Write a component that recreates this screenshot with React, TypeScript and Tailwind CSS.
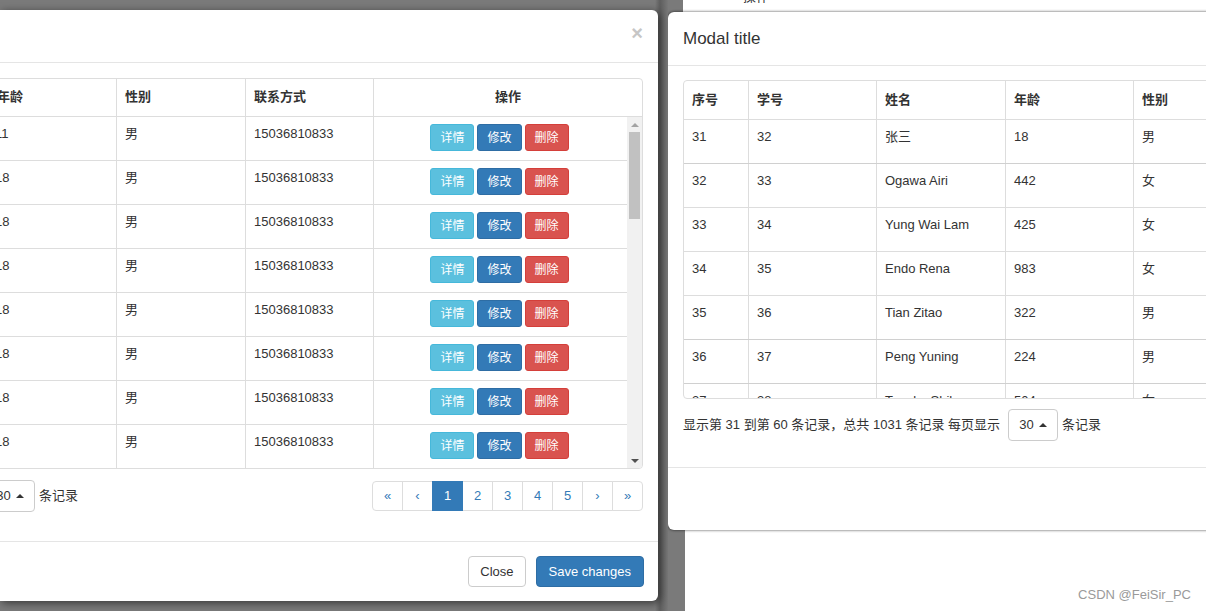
import React from "react";

const FONT = "font-['Liberation_Sans','Noto_Sans_CJK_SC',sans-serif]";
const colW = [65, 128, 129, 128, 129, 128];
const heads = ["序号", "学号", "姓名", "年龄", "性别", "联系方式"];

const leftRows = [
  ["11", "12", "李四", "11"],
  ["12", "13", "王五", "18"],
  ["13", "14", "赵六", "18"],
  ["14", "15", "孙七", "18"],
  ["15", "16", "周八", "18"],
  ["16", "17", "吴九", "18"],
  ["17", "18", "郑十", "18"],
  ["18", "19", "钱一", "18"],
];

const rightRows = [
  ["31", "32", "张三", "18", "男"],
  ["32", "33", "Ogawa Airi", "442", "女"],
  ["33", "34", "Yung Wai Lam", "425", "女"],
  ["34", "35", "Endo Rena", "983", "女"],
  ["35", "36", "Tian Zitao", "322", "男"],
  ["36", "37", "Peng Yuning", "224", "男"],
  ["37", "38", "Tanaka Shiho", "504", "女"],
];

function Caret() {
  return (
    <span className="inline-block w-0 h-0 border-x-[4px] border-x-transparent border-b-[4px] border-b-[#333] ml-[5px]" />
  );
}

function SizeSelect() {
  return (
    <div className="shrink-0 w-[50px] h-[32px] flex items-center justify-center bg-white border border-[#ccc] rounded-[4px] text-[13px] text-[#333]">
      <span>30</span>
      <Caret />
    </div>
  );
}

function Btn({ label, cls }: { label: string; cls: string }) {
  return (
    <div className={`h-[27px] px-[9px] flex items-center text-[12px] text-white rounded-[3px] border ${cls}`}>{label}</div>
  );
}

function LeftModal() {
  const pages = ["«", "‹", "1", "2", "3", "4", "5", "›", "»"];
  return (
    <div className="w-[658px] h-[591px] bg-white rounded-r-[6px] overflow-hidden shadow-[2px_2px_8px_rgba(0,0,0,0.55)]">
      <div className="w-[1007px] ml-[-349px] h-full flex flex-col">
        {/* header */}
        <div className="h-[53px] shrink-0 border-b border-[#e5e5e5] flex items-start justify-end pr-[15px] pt-[13px]">
          <span className="text-[20px] font-bold text-[#c6c6c6] leading-[20px]">×</span>
        </div>
        {/* body */}
        <div className="h-[478px] shrink-0 px-[15px] pt-[15px]">
          <div className="h-[391px] border border-[#ddd] rounded-[4px] overflow-hidden flex flex-col">
            <div className="h-[38px] shrink-0 flex border-b border-[#ddd]">
              {heads.map((h, i) => (
                <div key={h} style={{ width: colW[i] }} className="shrink-0 border-r border-[#ddd] pl-[8px] pt-[9px] text-[13px] leading-[18px] font-bold text-[#333]">
                  {h}
                </div>
              ))}
              <div className="flex-1 pt-[9px] text-center text-[13px] leading-[18px] font-bold text-[#333]">操作</div>
            </div>
            <div className="flex-1 flex overflow-hidden">
              <div className="flex-1 overflow-hidden">
                {leftRows.map((r, ri) => (
                  <div key={ri} className="h-[44px] flex border-b border-[#ddd]">
                    {[...r, "男", "15036810833"].map((c, i) => (
                      <div key={i} style={{ width: colW[i] }} className={`shrink-0 border-r border-[#ddd] ${i === 3 ? "pl-[6px]" : "pl-[8px]"} pt-[8px] text-[13px] leading-[18px] text-[#333]`}>
                        {c}
                      </div>
                    ))}
                    <div className="flex-1 flex justify-center gap-[3px] pt-[7px] pr-[2px]">
                      <Btn label="详情" cls="bg-[#5bc0de] border-[#46b8da]" />
                      <Btn label="修改" cls="bg-[#337ab7] border-[#2e6da4]" />
                      <Btn label="删除" cls="bg-[#d9534f] border-[#d43f3a]" />
                    </div>
                  </div>
                ))}
              </div>
              <div className="w-[15px] shrink-0 bg-[#f1f1f1] flex flex-col items-center">
                <div className="h-[15px] flex items-center justify-center">
                  <span className="w-0 h-0 border-x-[4px] border-x-transparent border-b-[4px] border-b-[#a3a3a3]" />
                </div>
                <div className="w-[11px] h-[87px] bg-[#c1c1c1]" />
                <div className="flex-1" />
                <div className="h-[15px] flex items-center justify-center">
                  <span className="w-0 h-0 border-x-[4px] border-x-transparent border-t-[4px] border-t-[#505050]" />
                </div>
              </div>
            </div>
          </div>
          <div className="mt-[11px] h-[32px] flex items-center justify-between">
            <div className="flex items-center text-[13px] text-[#333]">
              <span className="inline-block w-[315px] whitespace-nowrap overflow-hidden">显示第 1 到第 30 条记录，总共 1031 条记录 每页显示</span>
              <span className="ml-[4px]"><SizeSelect /></span>
              <span className="ml-[4px]">条记录</span>
            </div>
            <div className="flex">
              {pages.map((p, i) => (
                <div
                  key={i}
                  className={`w-[31px] h-[30px] flex items-center justify-center border text-[13px] ${i > 0 ? "-ml-px" : "rounded-l-[4px]"} ${i === 8 ? "rounded-r-[4px]" : ""} ${p === "1" ? "bg-[#337ab7] border-[#337ab7] text-white relative z-10" : "bg-white border-[#ddd] text-[#337ab7]"}`}
                >
                  {p}
                </div>
              ))}
            </div>
          </div>
        </div>
        {/* footer */}
        <div className="flex-1 border-t border-[#e5e5e5] flex justify-end items-start pt-[14px] pr-[14px] gap-[10px]">
          <div className="h-[31px] px-[11px] flex items-center bg-white border border-[#ccc] rounded-[4px] text-[13px] text-[#333]">Close</div>
          <div className="h-[31px] px-[12px] flex items-center bg-[#337ab7] border border-[#2e6da4] rounded-[4px] text-[13px] text-white">Save changes</div>
        </div>
      </div>
    </div>
  );
}

function RightModal() {
  return (
    <div className="relative z-10 w-[900px] h-[518px] shrink-0 bg-white rounded-l-[6px] overflow-hidden shadow-[0_0_3px_rgba(0,0,0,0.75)] flex flex-col">
      <div className="h-[54px] shrink-0 border-b border-[#e5e5e5] flex items-center pl-[15px] text-[17px] text-[#333]">Modal title</div>
      <div className="h-[401px] shrink-0 px-[15px] pt-[14px]">
        <div className="h-[319px] border border-[#ddd] rounded-[4px] overflow-hidden flex flex-col">
          <div className="h-[39px] shrink-0 flex border-b border-[#ddd]">
            {[...heads, "操作"].map((h, i) => (
              <div key={h} style={{ width: colW[i] ?? 200 }} className="shrink-0 border-r border-[#ddd] pl-[8px] pt-[10px] text-[13px] leading-[18px] font-bold text-[#333]">
                {h}
              </div>
            ))}
          </div>
          <div className="flex-1 overflow-hidden">
            {rightRows.map((r, ri) => (
              <div key={ri} className={`h-[44px] flex border-b ${ri === 0 || ri === 4 || ri === 5 ? "border-[#d0d0d0]" : "border-[#ddd]"}`}>
                {[...r, "15036810833"].map((c, i) => (
                  <div key={i} style={{ width: colW[i] }} className="shrink-0 border-r border-[#ddd] pl-[8px] pt-[8px] text-[13px] leading-[18px] text-[#333]">
                    {c}
                  </div>
                ))}
              </div>
            ))}
          </div>
        </div>
        <div className="mt-[10px] h-[31px] flex items-center text-[13px] text-[#333]">
          <span className="inline-block w-[321px] whitespace-nowrap">显示第 31 到第 60 条记录，总共 1031 条记录 每页显示</span>
          <span className="ml-[4px]"><SizeSelect /></span>
          <span className="ml-[4px]">条记录</span>
        </div>
      </div>
      <div className="flex-1 border-t border-[#e5e5e5]" />
    </div>
  );
}

export default function App() {
  return (
    <div className={`w-[1206px] h-[611px] overflow-hidden bg-[#7a7a7a] flex ${FONT}`}>
      <div className="w-[668px] shrink-0 pt-[10px] bg-[linear-gradient(to_right,#7a7a7a_655px,#5e5e5e_660px,#787878_668px)]">
        <LeftModal />
      </div>
      <div className="w-[538px] shrink-0 flex flex-col overflow-hidden">
        <div className="h-[12px] shrink-0 flex">
          <div className="w-[15px] bg-[#7a7a7a]" />
          <div className="flex-1 bg-white overflow-hidden">
            <div className="ml-[60px] -mt-[12px] text-[13px] leading-[18px] text-[#333]">操作</div>
          </div>
        </div>
        <RightModal />
        <div className="flex-1 flex">
          <div className="w-[17px] bg-[#7a7a7a]" />
          <div className="flex-1 bg-white flex items-end justify-end pr-[15px] pb-[7px]">
            <span className="text-[13px] text-[#9a9a9a]">CSDN @FeiSir_PC</span>
          </div>
        </div>
      </div>
    </div>
  );
}
